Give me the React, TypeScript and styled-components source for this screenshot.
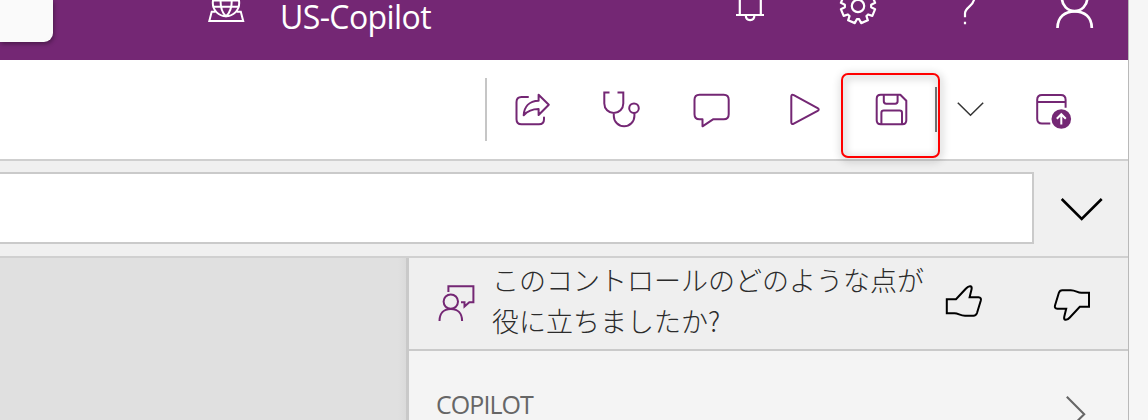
import React from 'react';
import styled, { createGlobalStyle } from 'styled-components';

const PURPLE = '#742774';

const GlobalStyle = createGlobalStyle`
  * { box-sizing: border-box; }
  body { margin: 0; font-family: "Open Sans", "Noto Sans", "Noto Sans CJK JP", sans-serif; }
`;

const Screen = styled.div`
  display: flex;
  width: 1148px;
  height: 420px;
  overflow: hidden;
  background: #f6f6f6;
`;

const Studio = styled.div`
  display: flex;
  flex-direction: column;
  width: 1129px;
  border-right: 1px solid #b9b9b9;
`;

const Header = styled.header`
  display: flex;
  height: 60px;
  flex: none;
  background: ${PURPLE};
  color: #fff;
`;

const SearchCard = styled.div`
  width: 53px;
  height: 42px;
  margin-right: 147px;
  background: #fafafa;
  border-bottom-right-radius: 9px;
  box-shadow: 1px 2px 4px rgba(0, 0, 0, 0.35);
`;

const EnvironmentName = styled.div`
  width: 458px;
  padding-left: 27px;
  font-size: 32px;
  line-height: 34px;
  letter-spacing: -0.6px;
  white-space: nowrap;
`;

const Toolbar = styled.div`
  display: flex;
  height: 101px;
  flex: none;
  padding-left: 485px;
  background: #fff;
  border-bottom: 2px solid #cfcfcf;
  color: ${PURPLE};
`;

const Divider = styled.div`
  width: 2px;
  height: 63px;
  margin-top: 18px;
  background: #c6c6c6;
`;

const SaveCell = styled.div`
  position: relative;
  display: flex;
  width: 98px;
`;

const SplitBar = styled.div`
  width: 2px;
  height: 45px;
  margin-top: 27px;
  background: #767676;
`;

const Highlight = styled.div`
  position: absolute;
  left: 0;
  top: 13px;
  width: 99px;
  height: 85px;
  border: 2px solid #ff0000;
  border-radius: 7px;
  filter: drop-shadow(1px 2px 4px rgba(0, 0, 0, 0.45));
`;

const FormulaBar = styled.div`
  display: flex;
  align-items: center;
  height: 97px;
  flex: none;
  padding-bottom: 1px;
  background: #f0f0f0;
  border-bottom: 2px solid #d0d0d0;
`;

const FormulaInput = styled.div`
  width: 1034px;
  height: 72px;
  background: #fff;
  border: 2px solid #cacaca;
  border-left: 0;
`;

const Workspace = styled.div`
  display: flex;
  flex: 1;
  min-height: 0;
`;

const Canvas = styled.div`
  width: 406px;
  background: linear-gradient(90deg, #e0e0e0 398px, #dadada);
`;

const Panel = styled.aside`
  display: flex;
  flex-direction: column;
  width: 722px;
  border-left: 3px solid #c9c9c9;
  background: #f4f4f4;
`;

const Feedback = styled.div`
  display: flex;
  height: 93px;
  flex: none;
  background: #efefef;
  border-bottom: 2px solid #cacaca;
`;

const Question = styled.p`
  width: 441px;
  margin: 1px 0 0;
  font-family: "Noto Sans CJK JP", sans-serif;
  font-weight: 300;
  font-size: 27px;
  line-height: 41px;
  color: #2b2b2b;
  white-space: nowrap;
`;

const Section = styled.div`
  display: flex;
  justify-content: space-between;
  height: 69px;
  flex: none;
  padding-left: 27px;
`;

const SectionTitle = styled.div`
  margin-top: 38px;
  font-size: 25px;
  line-height: 30px;
  letter-spacing: -0.95px;
  color: #666;
`;

const Drawing = styled.svg`
  display: block;
  flex: none;
  fill: none;
  stroke: currentColor;
`;

const ReactionDrawing = styled(Drawing)`
  color: #000;
`;

type IconProps = {
  box: [number, number, number, number];
  weight?: number;
  color?: string;
  children: React.ReactNode;
};

const Icon = ({ box, weight = 2, color, children }: IconProps) => (
  <Drawing
    width={box[2]}
    height={box[3]}
    viewBox={box.join(' ')}
    strokeWidth={weight}
    color={color}
    aria-hidden
  >
    {children}
  </Drawing>
);

const gearPath = () => {
  const points: string[] = [];
  for (let i = 0; i < 8; i++) {
    const steps: [number, number][] = [[-5, 13.2], [5, 13.2], [10.5, 17.4], [34.5, 17.4]];
    for (const [deg, r] of steps) {
      const a = ((i * 45 + deg) * Math.PI) / 180;
      points.push(`${(858 + r * Math.cos(a)).toFixed(2)} ${(6 + r * Math.sin(a)).toFixed(2)}`);
    }
  }
  return `M${points.join('L')}Z`;
};

const THUMB =
  'M946.8 299.3H956L966 288.5C968 286.2 969.5 286 970.5 286.2C972 286.7 971.8 288.3 971.5 289.5L969.6 297.3H978.5C980.7 297.4 981.3 298.7 980.8 300.5L977 313C976.3 315 975.5 315.7 973.5 315.7H965C960 315.6 958.5 313.3 954.5 313.2H946.8Z';

export default function App() {
  return (
    <Screen>
      <GlobalStyle />
      <Studio>
        <Header>
          <SearchCard />
          <Icon box={[200, 0, 53, 60]} weight={2}>
            <circle cx="226" cy="3" r="13.2" />
            <path d="M212.8 6.7H239.2M213 .5H239M220.5 0C220.5 7 222 13 226 16.2C230 13 231.8 7 231.8 0M215.5 11.8H211.7L209.3 21H243.2L240.8 11.8H236.5" />
          </Icon>
          <EnvironmentName>US-Copilot</EnvironmentName>
          <Icon box={[711, 0, 90, 60]} weight={2.2}>
            <path d="M739.8 -2V15M760.8 -2V15M736 15H764M745.8 15.5C746 21.6 754.2 21.6 754.4 15.5" />
          </Icon>
          <Icon box={[801, 0, 120, 60]} weight={2.2}>
            <circle cx="858" cy="6" r="6.2" />
            <path d={gearPath()} strokeLinejoin="round" />
          </Icon>
          <Icon box={[921, 0, 100, 60]} weight={2.2}>
            <path d="M974.3 -2C974.3 6 965 7 965 13.5V17.3M965 21.8V24.2" />
          </Icon>
          <Icon box={[1021, 0, 107, 60]} weight={2.7}>
            <circle cx="1074.6" cy="-1.5" r="12.6" />
            <path d="M1057.5 28C1057.5 17 1065 11.3 1074.7 11.3S1091.8 17 1091.8 28" />
          </Icon>
        </Header>

        <Toolbar>
          <Divider />
          <Icon box={[487, 60, 90, 99]}>
            <path
              strokeLinejoin="round"
              strokeLinecap="round"
              d="M528 97H521.5Q516.5 97 516.5 102V119.2Q516.5 124.2 521.5 124.2H539Q544 124.2 544 119.2V117.5M538.6 94.7L548.8 104.8L538.6 115V109C532 109 528 110.5 523.7 115.2C524.2 107 529 101 538.6 100.7Z"
            />
          </Icon>
          <Icon box={[577, 60, 90, 99]}>
            <path d="M609.5 92.5H604.3V103.5A9.5 9.5 0 0 0 623.3 103.5V92.5H617.5M613.8 113V116A10.3 10.3 0 0 0 634.4 116V113" />
            <circle cx="634" cy="108.2" r="4.8" />
          </Icon>
          <Icon box={[667, 60, 90, 99]}>
            <path
              strokeLinejoin="round"
              d="M699.5 94.7H723.7Q728.7 94.7 728.7 99.7V114.3Q728.7 119.3 723.7 119.3H713L702.5 126.3V119.3H699.5Q694.5 119.3 694.5 114.3V99.7Q694.5 94.7 699.5 94.7Z"
            />
          </Icon>
          <Icon box={[757, 60, 84, 99]}>
            <path d="M791.3 96.5Q791.3 93.8 793.8 95.1L817.6 108Q819.8 109.4 817.6 110.8L793.8 123.6Q791.3 124.9 791.3 122.3Z" />
          </Icon>
          <SaveCell>
            <Icon box={[841, 60, 94, 99]}>
              <path
                strokeLinejoin="round"
                d="M880.7 94.8H900.3L906.3 100.8V120.3Q906.3 124.3 902.3 124.3H880.7Q876.7 124.3 876.7 120.3V98.8Q876.7 94.8 880.7 94.8ZM883.8 95V101.3Q883.8 103.7 886.2 103.7H895.2Q897.6 103.7 897.6 101.3V95M881.4 124V112.8Q881.4 110.5 883.8 110.5H899.6Q902 110.5 902 112.8V124"
              />
            </Icon>
            <SplitBar />
            <Highlight />
          </SaveCell>
          <Icon box={[939, 60, 62, 99]} weight={1.5} color="#333">
            <path d="M957.8 102.8L970.5 115.3L983.2 102.8" />
          </Icon>
          <Icon box={[1001, 60, 106, 99]}>
            <path d="M1050.3 123.6H1042Q1037.2 123.6 1037.2 118.8V99.7Q1037.2 94.9 1042 94.9H1060.8Q1065.6 94.9 1065.6 99.7V107.8M1037.5 102H1065.5" />
            <circle cx="1061.3" cy="119" r="9.8" fill="currentColor" stroke="none" />
            <path d="M1061.3 124.5V114.2M1056.8 118.7L1061.3 114.2L1065.8 118.7" stroke="#fff" />
          </Icon>
        </Toolbar>

        <FormulaBar>
          <FormulaInput />
          <Icon box={[1034, 161, 94, 95]} weight={2.6} color="#000">
            <path d="M1061.7 199L1081.7 219L1101.7 199" />
          </Icon>
        </FormulaBar>

        <Workspace>
          <Canvas />
          <Panel>
            <Feedback>
              <Icon box={[409, 258, 83, 91]} color={PURPLE}>
                <path d="M448.4 292V286.2H473.4V302.2H469.3L464.5 306.6V302.2H461" />
                <circle cx="450.8" cy="301.6" r="7.2" />
                <path d="M439.5 321C439.5 313 444 308.9 450.8 308.9S462.1 313 462.1 321" />
              </Icon>
              <Question>
                このコントロールのどのような点が
                <br />
                役に立ちましたか?
              </Question>
              <ReactionDrawing width="83" height="91" viewBox="933 258 83 91" strokeWidth="2">
                <path d={THUMB} />
              </ReactionDrawing>
              <ReactionDrawing width="112" height="91" viewBox="1016 258 112 91" strokeWidth="2">
                <path d={THUMB} transform="rotate(180 1017.9 303)" />
              </ReactionDrawing>
            </Feedback>
            <Section>
              <SectionTitle>COPILOT</SectionTitle>
              <Icon box={[1028, 351, 100, 69]} weight={2.1} color="#666">
                <path d="M1066.8 396.8L1084.2 414.2L1066.8 431.6" />
              </Icon>
            </Section>
          </Panel>
        </Workspace>
      </Studio>
    </Screen>
  );
}
